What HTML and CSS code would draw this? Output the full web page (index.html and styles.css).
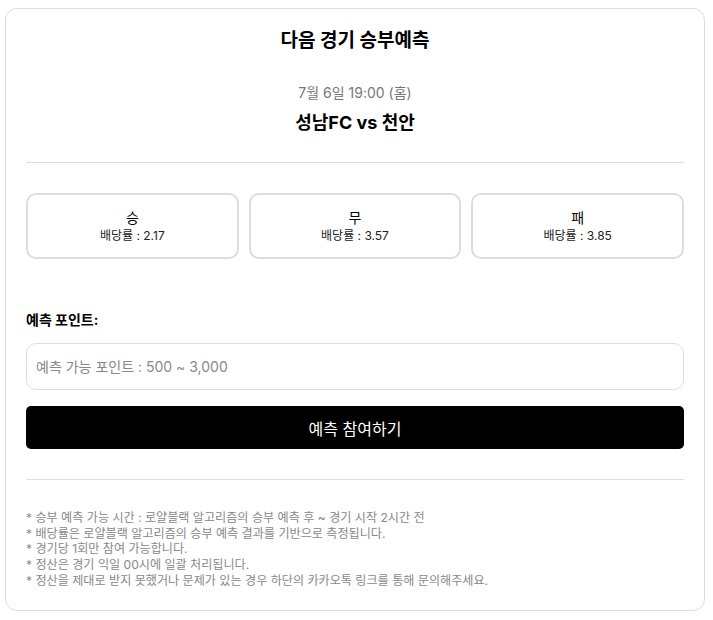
FILE: index.html
```html
<!DOCTYPE html>
<html lang="ko">

<head>
    <meta charset="UTF-8">
    <meta name="viewport" content="width=device-width, initial-scale=1.0">
    <title>승부예측</title>
    <link rel="stylesheet" href="styles.css">
</head>

<body>
    <div class="predict-card">
        <h2 class="predict-title">다음 경기 승부예측</h2>

        <div class="match-info">
            <div class="match-date">7월 6일 19:00 (홈)</div>
            <div class="match-teams">성남FC vs 천안</div>
        </div>

        <hr class="divider">

        <div class="options">
            <button class="option">
                <span class="option-label">승</span>
                <span class="option-odds">배당률 : 2.17</span>
            </button>
            <button class="option">
                <span class="option-label">무</span>
                <span class="option-odds">배당률 : 3.57</span>
            </button>
            <button class="option">
                <span class="option-label">패</span>
                <span class="option-odds">배당률 : 3.85</span>
            </button>
        </div>

        <label class="point-label" for="pointInput">예측 포인트:</label>
        <input type="text" id="pointInput" class="point-input" placeholder="예측 가능 포인트 : 500 ~ 3,000">
        <button class="submit-btn">예측 참여하기</button>

        <hr class="divider divider-bottom">

        <ul class="notes">
            <li>* 승부 예측 가능 시간 : 로얄블랙 알고리즘의 승부 예측 후 ~ 경기 시작 2시간 전</li>
            <li>* 배당률은 로얄블랙 알고리즘의 승부 예측 결과를 기반으로 측정됩니다.</li>
            <li>* 경기당 1회만 참여 가능합니다.</li>
            <li>* 정산은 경기 익일 00시에 일괄 처리됩니다.</li>
            <li>* 정산을 제대로 받지 못했거나 문제가 있는 경우 하단의 카카오톡 링크를 통해 문의해주세요.</li>
        </ul>
    </div>
</body>

</html>
```

FILE: styles.css
```css
* {
    margin: 0;
    padding: 0;
    box-sizing: border-box;
}

body {
    font-family: Inter, 'Noto Sans CJK KR', sans-serif;
    background: #fff;
    color: #000;
    padding: 8px 8px 8px 5px;
}

.predict-card {
    width: 700px;
    border: 1px solid #ddd;
    border-radius: 12px;
    padding: 20px 20px 21px;
    background: #fff;
}

.predict-title {
    font-size: 19px;
    font-weight: 700;
    line-height: 24px;
    text-align: center;
}

.match-info {
    margin-top: 30px;
    text-align: center;
}

.match-date {
    font-size: 14px;
    line-height: 20px;
    color: #777;
}

.match-teams {
    margin-top: 8px;
    font-size: 18px;
    font-weight: 700;
    line-height: 24px;
}

.divider {
    border: none;
    border-top: 1px solid #ddd;
    margin-top: 27px;
}

.options {
    display: grid;
    grid-template-columns: repeat(3, 1fr);
    gap: 10px;
    margin-top: 30px;
}

.option {
    height: 66px;
    display: flex;
    flex-direction: column;
    align-items: center;
    justify-content: center;
    gap: 1px;
    background: #fff;
    border: 2px solid #ddd;
    border-radius: 10px;
    font-family: inherit;
    color: #000;
    cursor: pointer;
}

.option-label {
    font-size: 14px;
    line-height: 18px;
}

.option-odds {
    font-size: 12px;
    line-height: 16px;
    color: #222;
}

.point-label {
    display: block;
    margin-top: 51px;
    font-size: 14px;
    font-weight: 700;
    line-height: 20px;
}

.point-input {
    display: block;
    width: 100%;
    height: 47px;
    margin-top: 13px;
    padding: 0 9px;
    border: 1px solid #ddd;
    border-radius: 10px;
    font-family: inherit;
    font-size: 14px;
    outline: none;
}

.point-input::placeholder {
    color: #888;
}

.submit-btn {
    display: block;
    width: 100%;
    height: 43px;
    margin-top: 16px;
    background: #000;
    color: #fff;
    border: none;
    border-radius: 5px;
    font-family: inherit;
    font-size: 16px;
    cursor: pointer;
}

.divider-bottom {
    margin-top: 30px;
}

.notes {
    list-style: none;
    margin-top: 30px;
    font-size: 12.1px;
    line-height: 15.7px;
    color: #888;
}
```
